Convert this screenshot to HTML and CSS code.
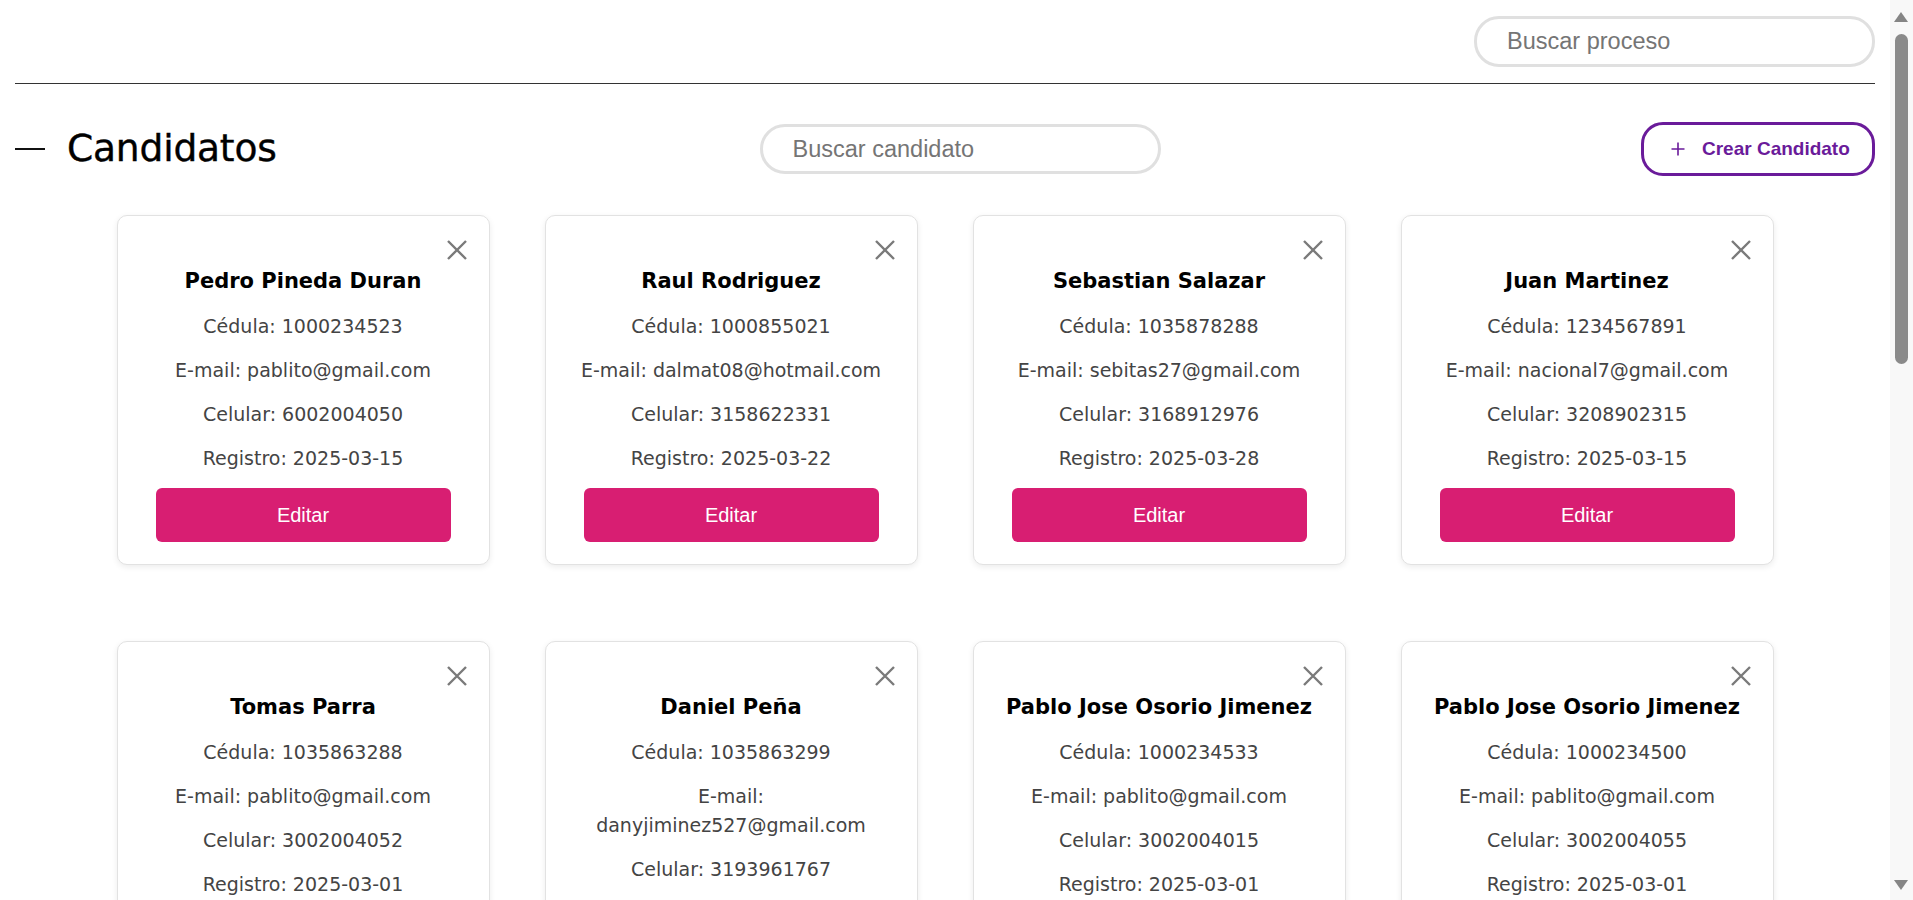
FILE: index.html
```html
<!DOCTYPE html>
<html lang="es">
<head>
<meta charset="utf-8">
<title>Candidatos</title>
<link rel="stylesheet" href="styles.css">
</head>
<body>
<div class="page">
  <header class="topbar">
    <input class="search search-top" type="text" placeholder="Buscar proceso">
  </header>
  <div class="toolbar">
    <div class="title-block">
      <span class="dash"></span>
      <h1 class="title">Candidatos</h1>
    </div>
    <input class="search" type="text" placeholder="Buscar candidato">
    <button class="create-btn" type="button">
      <svg class="plus" viewBox="0 0 14 14" width="14" height="14"><path d="M7 0.5V13.5M0.5 7H13.5" stroke="#6a1b9a" stroke-width="1.6" fill="none"/></svg>
      <span>Crear Candidato</span>
    </button>
  </div>
  <main class="grid">
    <article class="card">
      <svg class="close" viewBox="0 0 20 20" width="20" height="20"><path d="M1 1L19 19M19 1L1 19" stroke="#7a7a7a" stroke-width="2.4" fill="none"/></svg>
      <h2 class="name">Pedro Pineda Duran</h2>
      <p class="info">Cédula: 1000234523</p>
      <p class="info">E-mail: pablito@gmail.com</p>
      <p class="info">Celular: 6002004050</p>
      <p class="info">Registro: 2025-03-15</p>
      <button class="edit-btn" type="button">Editar</button>
    </article>
    <article class="card">
      <svg class="close" viewBox="0 0 20 20" width="20" height="20"><path d="M1 1L19 19M19 1L1 19" stroke="#7a7a7a" stroke-width="2.4" fill="none"/></svg>
      <h2 class="name">Raul Rodriguez</h2>
      <p class="info">Cédula: 1000855021</p>
      <p class="info">E-mail: dalmat08@hotmail.com</p>
      <p class="info">Celular: 3158622331</p>
      <p class="info">Registro: 2025-03-22</p>
      <button class="edit-btn" type="button">Editar</button>
    </article>
    <article class="card">
      <svg class="close" viewBox="0 0 20 20" width="20" height="20"><path d="M1 1L19 19M19 1L1 19" stroke="#7a7a7a" stroke-width="2.4" fill="none"/></svg>
      <h2 class="name">Sebastian Salazar</h2>
      <p class="info">Cédula: 1035878288</p>
      <p class="info">E-mail: sebitas27@gmail.com</p>
      <p class="info">Celular: 3168912976</p>
      <p class="info">Registro: 2025-03-28</p>
      <button class="edit-btn" type="button">Editar</button>
    </article>
    <article class="card">
      <svg class="close" viewBox="0 0 20 20" width="20" height="20"><path d="M1 1L19 19M19 1L1 19" stroke="#7a7a7a" stroke-width="2.4" fill="none"/></svg>
      <h2 class="name">Juan Martinez</h2>
      <p class="info">Cédula: 1234567891</p>
      <p class="info">E-mail: nacional7@gmail.com</p>
      <p class="info">Celular: 3208902315</p>
      <p class="info">Registro: 2025-03-15</p>
      <button class="edit-btn" type="button">Editar</button>
    </article>
    <article class="card">
      <svg class="close" viewBox="0 0 20 20" width="20" height="20"><path d="M1 1L19 19M19 1L1 19" stroke="#7a7a7a" stroke-width="2.4" fill="none"/></svg>
      <h2 class="name">Tomas Parra</h2>
      <p class="info">Cédula: 1035863288</p>
      <p class="info">E-mail: pablito@gmail.com</p>
      <p class="info">Celular: 3002004052</p>
      <p class="info">Registro: 2025-03-01</p>
      <button class="edit-btn" type="button">Editar</button>
    </article>
    <article class="card">
      <svg class="close" viewBox="0 0 20 20" width="20" height="20"><path d="M1 1L19 19M19 1L1 19" stroke="#7a7a7a" stroke-width="2.4" fill="none"/></svg>
      <h2 class="name">Daniel Peña</h2>
      <p class="info">Cédula: 1035863299</p>
      <p class="info">E-mail: danyjiminez527@gmail.com</p>
      <p class="info">Celular: 3193961767</p>
      <p class="info">Registro: 2025-03-01</p>
      <button class="edit-btn" type="button">Editar</button>
    </article>
    <article class="card">
      <svg class="close" viewBox="0 0 20 20" width="20" height="20"><path d="M1 1L19 19M19 1L1 19" stroke="#7a7a7a" stroke-width="2.4" fill="none"/></svg>
      <h2 class="name">Pablo Jose Osorio Jimenez</h2>
      <p class="info">Cédula: 1000234533</p>
      <p class="info">E-mail: pablito@gmail.com</p>
      <p class="info">Celular: 3002004015</p>
      <p class="info">Registro: 2025-03-01</p>
      <button class="edit-btn" type="button">Editar</button>
    </article>
    <article class="card">
      <svg class="close" viewBox="0 0 20 20" width="20" height="20"><path d="M1 1L19 19M19 1L1 19" stroke="#7a7a7a" stroke-width="2.4" fill="none"/></svg>
      <h2 class="name">Pablo Jose Osorio Jimenez</h2>
      <p class="info">Cédula: 1000234500</p>
      <p class="info">E-mail: pablito@gmail.com</p>
      <p class="info">Celular: 3002004055</p>
      <p class="info">Registro: 2025-03-01</p>
      <button class="edit-btn" type="button">Editar</button>
    </article>
  </main>
</div>
<div class="scrollbar" aria-hidden="true">
  <span class="sb-arrow sb-up"></span>
  <span class="sb-thumb"></span>
  <span class="sb-arrow sb-down"></span>
</div>
</body>
</html>
```
FILE: styles.css
```css
* { box-sizing: border-box; }

html, body {
  margin: 0;
  padding: 0;
  background: #ffffff;
}

body {
  font-family: "DejaVu Sans", "Noto Sans", sans-serif;
  color: #000;
}

.page {
  padding: 0 38px 40px 15px;
}

.topbar {
  display: flex;
  justify-content: flex-end;
  padding-top: 16px;
  padding-bottom: 16px;
  border-bottom: 1px solid #333333;
}

.search {
  width: 401px;
  height: 50px;
  border: 3px solid #e0e0e0;
  border-radius: 25px;
  padding: 0 20px 0 30px;
  font-family: "Liberation Sans", Arial, sans-serif;
  font-size: 23.5px;
  color: #333;
  background: #fff;
  outline: none;
}

.search-top {
  height: 51px;
}

.search::placeholder {
  color: #757575;
}

.toolbar {
  display: flex;
  justify-content: space-between;
  align-items: center;
  margin-top: 38px;
}

.title-block {
  display: flex;
  align-items: center;
  width: 264px;
}

.dash {
  display: block;
  width: 30px;
  height: 2px;
  background: #111;
  margin-right: 22px;
}

.title {
  margin: 0;
  font-size: 37.6px;
  font-weight: normal;
  line-height: 1;
  letter-spacing: -0.2px;
  -webkit-text-stroke: 0.4px #000;
}

.create-btn {
  display: flex;
  align-items: center;
  gap: 17px;
  width: 234px;
  height: 54px;
  padding: 0 0 0 27px;
  border: 3px solid #6a1b9a;
  border-radius: 22px;
  background: #fff;
  color: #6a1b9a;
  font-family: "Liberation Sans", Arial, sans-serif;
  font-weight: bold;
  font-size: 19px;
  cursor: pointer;
}

.plus {
  display: block;
  flex: none;
}

.grid {
  display: grid;
  grid-template-columns: repeat(4, 373px);
  justify-content: center;
  column-gap: 55px;
  row-gap: 76px;
  margin-top: 39px;
}

.card {
  position: relative;
  display: flex;
  flex-direction: column;
  align-items: center;
  gap: 15px;
  padding: 50px 24px 22px;
  background: #fff;
  border: 1px solid #e2e2e2;
  border-radius: 10px;
  box-shadow: 0 2px 6px rgba(0, 0, 0, 0.08);
  text-align: center;
}

.close {
  position: absolute;
  top: 24px;
  right: 22px;
}

.name {
  margin: 0;
  font-size: 21px;
  font-weight: bold;
  line-height: 31px;
  color: #000;
}

.info {
  margin: 0;
  font-size: 19px;
  line-height: 29px;
  color: #444;
}

.edit-btn {
  width: 295px;
  height: 54px;
  border: none;
  border-radius: 6px;
  background: #d81e72;
  color: #fff;
  font-family: "Liberation Sans", Arial, sans-serif;
  font-size: 20px;
  cursor: pointer;
}

/* imitation of the window's classic scrollbar */
.scrollbar {
  position: fixed;
  top: 0;
  right: 0;
  width: 23px;
  height: 100vh;
  background: #f8f8f8;
}

.sb-thumb {
  position: absolute;
  top: 34px;
  left: 5px;
  width: 13px;
  height: 330px;
  border-radius: 7px;
  background: #8a8a8a;
}

.sb-arrow {
  position: absolute;
  left: 4px;
  width: 0;
  height: 0;
  border-left: 7.5px solid transparent;
  border-right: 7.5px solid transparent;
}

.sb-up {
  top: 12px;
  border-bottom: 10px solid #858585;
}

.sb-down {
  bottom: 10px;
  border-top: 10px solid #858585;
}
```
